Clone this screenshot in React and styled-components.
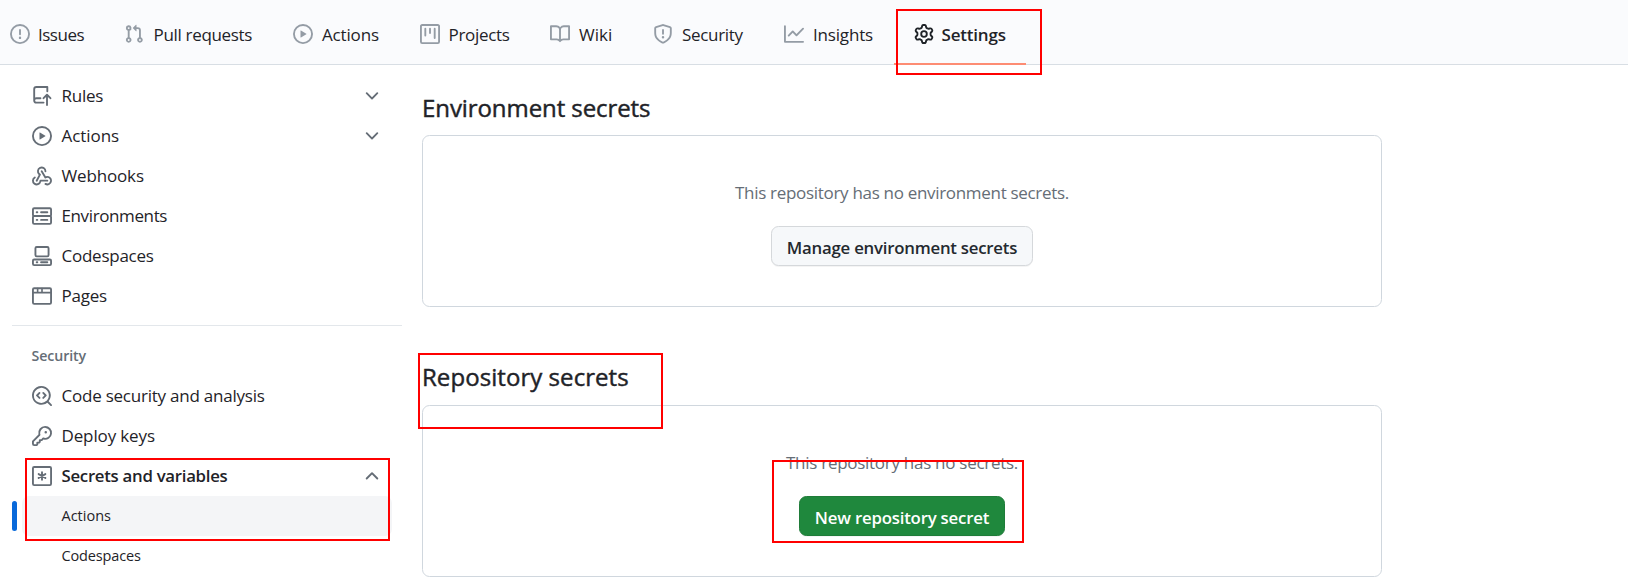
import React from "react";
import styled, { createGlobalStyle, css } from "styled-components";

const GlobalStyle = createGlobalStyle`
  *, *::before, *::after { box-sizing: border-box; }
  body {
    margin: 0;
    background: #fff;
    color: #1f2328;
    font-family: "Open Sans", "Noto Sans", sans-serif;
    overflow: hidden;
  }
  h2, p { margin: 0; }
`;

const Page = styled.div`
  position: relative;
  width: 1628px;
  height: 588px;
  overflow: hidden;
`;

const Nav = styled.nav`
  display: flex;
  height: 65px;
  background: #fafbfd;
  border-bottom: 1px solid #d8dee4;
`;

const Tab = styled.a`
  display: flex;
  flex: none;
  align-items: center;
  gap: ${(p) => p.$gap ?? 9}px;
  width: ${(p) => p.$width}px;
  height: 65px;
  padding: 4px 0 0 ${(p) => p.$pad ?? 20}px;
  border-bottom: 2px solid ${(p) => (p.$active ? "#fd8c73" : "transparent")};
  color: #1f2328;
  font-size: 17px;
  font-weight: ${(p) => (p.$active ? 600 : 400)};
  letter-spacing: ${(p) => p.$track ?? 0}px;
  white-space: nowrap;
  svg { color: ${(p) => (p.$active ? "#1f2328" : "#949ca5")}; }
`;

const TabLabel = styled.span`
  padding-top: 2px;
`;

const Glyph = styled.svg`
  flex: none;
  width: 20px;
  height: 20px;
  overflow: visible;
`;

const Body = styled.div`
  display: flex;
`;

const Sidebar = styled.aside`
  width: 390px;
  margin-left: 12px;
  padding-top: 11px;
`;

const NavRow = styled.a`
  display: flex;
  align-items: center;
  gap: 9.5px;
  height: 40px;
  padding: 0 20px;
  color: #1f2328;
  font-size: ${(p) => (p.$bold ? 16.8 : 17)}px;
  font-weight: ${(p) => (p.$bold ? 600 : 400)};
  letter-spacing: ${(p) => p.$track ?? 0}px;
  white-space: nowrap;
  svg { color: #656d76; }
`;

const RowLabel = styled.span`
  flex: 1;
  padding-bottom: 2px;
`;

const Divider = styled.hr`
  height: 1px;
  margin: 9px 0;
  border: 0;
  background: #e3e7eb;
`;

const GroupTitle = styled.div`
  height: 41px;
  padding: 0 19.5px;
  color: #656d76;
  font-size: 14.2px;
  font-weight: 600;
  line-height: 41px;
  letter-spacing: -0.1px;
`;

const SubRow = styled.a`
  position: relative;
  display: block;
  height: 40px;
  margin: 0 10px;
  padding-left: 39.5px;
  border-radius: 7px;
  color: #1f2328;
  font-size: 14.5px;
  line-height: 40px;
  letter-spacing: ${(p) => p.$track ?? 0}px;
  ${(p) =>
    p.$current &&
    css`
      background: #f4f5f7;
      &::before {
        content: "";
        position: absolute;
        left: -10px;
        top: 5px;
        width: 5px;
        height: 30px;
        border-radius: 4px;
        background: #0969da;
      }
    `}
`;

const Main = styled.main`
  width: 960px;
  margin-left: 20px;
  padding-top: 22px;
`;

const Section = styled.section`
  height: 270px;
`;

const Heading = styled.h2`
  height: 48px;
  font-size: 24px;
  font-weight: 400;
  -webkit-text-stroke: 0.45px currentColor;
  line-height: ${(p) => p.$leading}px;
  letter-spacing: ${(p) => p.$track ?? 0}px;
`;

const Blankslate = styled.div`
  display: flex;
  flex-direction: column;
  align-items: center;
  height: 172px;
  padding-top: 42px;
  border: 1px solid #d0d7de;
  border-radius: 7.5px;
`;

const Note = styled.p`
  height: 48px;
  color: #656d76;
  font-size: 17px;
  line-height: 30px;
  letter-spacing: ${(p) => p.$track ?? 0}px;
`;

const Button = styled.button`
  width: ${(p) => p.$width}px;
  height: 40px;
  padding: 3px 0 0;
  border: 1px solid ${(p) => (p.$primary ? "#1f7c39" : "#d5d8db")};
  border-radius: 7.5px;
  background: ${(p) => (p.$primary ? "#1f883d" : "#f6f8fa")};
  box-shadow: 0 1px 0 rgba(31, 35, 40, 0.05);
  color: ${(p) => (p.$primary ? "#fff" : "#24292f")};
  font-family: inherit;
  font-size: 16.8px;
  font-weight: 600;
  line-height: 35px;
  letter-spacing: ${(p) => p.$track ?? 0}px;
`;

const Marker = styled.div`
  position: absolute;
  left: ${(p) => p.$x}px;
  top: ${(p) => p.$y}px;
  width: ${(p) => p.$w}px;
  height: ${(p) => p.$h}px;
  border: 2px solid #ff0000;
  pointer-events: none;
`;

const paths = {
  pull: "M1.5 3.25a2.25 2.25 0 1 1 3 2.122v5.256a2.251 2.251 0 1 1-1.5 0V5.372A2.25 2.25 0 0 1 1.5 3.25Zm5.677-.177L9.573.677A.25.25 0 0 1 10 .854V2.5h1A2.5 2.5 0 0 1 13.5 5v5.628a2.251 2.251 0 1 1-1.5 0V5a1 1 0 0 0-1-1h-1v1.646a.25.25 0 0 1-.427.177L7.177 3.427a.25.25 0 0 1 0-.354ZM3.75 2.5a.75.75 0 1 0 0 1.5.75.75 0 0 0 0-1.5Zm0 9.5a.75.75 0 1 0 0 1.5.75.75 0 0 0 0-1.5Zm8.25.75a.75.75 0 1 0 1.5 0 .75.75 0 0 0-1.5 0Z",
  play: "M8 0a8 8 0 1 1 0 16A8 8 0 0 1 8 0ZM1.5 8a6.5 6.5 0 1 0 13 0 6.5 6.5 0 0 0-13 0Zm4.879-2.773 4.264 2.559a.25.25 0 0 1 0 .428l-4.264 2.559A.25.25 0 0 1 6 10.559V5.442a.25.25 0 0 1 .379-.215Z",
  project: "M1.75 0h12.5C15.216 0 16 .784 16 1.75v12.5A1.75 1.75 0 0 1 14.25 16H1.75A1.75 1.75 0 0 1 0 14.25V1.75C0 .784.784 0 1.75 0ZM1.5 1.75v12.5c0 .138.112.25.25.25h12.5a.25.25 0 0 0 .25-.25V1.75a.25.25 0 0 0-.25-.25H1.75a.25.25 0 0 0-.25.25ZM11.75 3a.75.75 0 0 1 .75.75v7.5a.75.75 0 0 1-1.5 0v-7.5a.75.75 0 0 1 .75-.75Zm-8.25.75a.75.75 0 0 1 1.5 0v5.5a.75.75 0 0 1-1.5 0ZM8 3a.75.75 0 0 1 .75.75v3.5a.75.75 0 0 1-1.5 0v-3.5A.75.75 0 0 1 8 3Z",
  book: "M0 1.75A.75.75 0 0 1 .75 1h4.253c1.227 0 2.317.59 3 1.501A3.743 3.743 0 0 1 11.006 1h4.245a.75.75 0 0 1 .75.75v10.5a.75.75 0 0 1-.75.75h-4.507a2.25 2.25 0 0 0-1.591.659l-.622.621a.75.75 0 0 1-1.06 0l-.622-.621A2.25 2.25 0 0 0 5.258 13H.75a.75.75 0 0 1-.75-.75Zm7.251 10.324.004-5.073-.002-2.253A2.25 2.25 0 0 0 5.003 2.5H1.5v9h3.757a3.75 3.75 0 0 1 1.994.574ZM8.755 4.75l-.004 7.322a3.752 3.752 0 0 1 1.992-.572H14.5v-9h-3.495a2.25 2.25 0 0 0-2.25 2.25Z",
  shield: "M7.467.133a1.748 1.748 0 0 1 1.066 0l5.25 1.68A1.75 1.75 0 0 1 15 3.48V7c0 1.566-.32 3.182-1.303 4.682-.983 1.498-2.585 2.813-5.032 3.855a1.697 1.697 0 0 1-1.33 0c-2.447-1.042-4.049-2.357-5.032-3.855C1.32 10.182 1 8.566 1 7V3.48a1.75 1.75 0 0 1 1.217-1.667Zm.61 1.429a.25.25 0 0 0-.153 0l-5.25 1.68a.25.25 0 0 0-.174.238V7c0 1.358.275 2.666 1.057 3.86.784 1.194 2.121 2.34 4.366 3.297a.196.196 0 0 0 .154 0c2.245-.956 3.582-2.104 4.366-3.298C13.225 9.666 13.5 8.36 13.5 7V3.48a.251.251 0 0 0-.174-.237l-5.25-1.68ZM8.75 4.75v3a.75.75 0 0 1-1.5 0v-3a.75.75 0 0 1 1.5 0ZM9 10.5a1 1 0 1 1-2 0 1 1 0 0 1 2 0Z",
  graph: "M1.5 1.75V13.5h13.75a.75.75 0 0 1 0 1.5H.75a.75.75 0 0 1-.75-.75V1.75a.75.75 0 0 1 1.5 0Zm14.28 2.53-5.25 5.25a.75.75 0 0 1-1.06 0L7 7.06 4.28 9.78a.751.751 0 0 1-1.042-.018.751.751 0 0 1-.018-1.042l3.25-3.25a.75.75 0 0 1 1.06 0L10 7.94l4.72-4.72a.751.751 0 0 1 1.042.018.751.751 0 0 1 .018 1.042Z",
  gear: "M8 0a8.2 8.2 0 0 1 .701.031C9.444.095 9.99.645 10.16 1.29l.288 1.107c.018.066.079.158.212.224.231.114.454.243.668.386.123.082.233.09.299.071l1.103-.303c.644-.176 1.392.021 1.82.63.27.385.506.792.704 1.218.315.675.111 1.422-.364 1.891l-.814.806c-.049.048-.098.147-.088.294.016.257.016.515 0 .772-.01.147.038.246.088.294l.814.806c.475.469.679 1.216.364 1.891a7.977 7.977 0 0 1-.704 1.217c-.428.61-1.176.807-1.82.63l-1.102-.302c-.067-.019-.177-.011-.3.071a5.909 5.909 0 0 1-.668.386c-.133.066-.194.158-.211.224l-.29 1.106c-.168.646-.715 1.196-1.458 1.26a8.006 8.006 0 0 1-1.402 0c-.743-.064-1.289-.614-1.458-1.26l-.289-1.106c-.018-.066-.079-.158-.212-.224a5.738 5.738 0 0 1-.668-.386c-.123-.082-.233-.09-.299-.071l-1.103.303c-.644.176-1.392-.021-1.82-.63a8.12 8.12 0 0 1-.704-1.218c-.315-.675-.111-1.422.363-1.891l.815-.806c.05-.048.098-.147.088-.294a6.214 6.214 0 0 1 0-.772c.01-.147-.038-.246-.088-.294l-.815-.806C.635 6.045.431 5.298.746 4.623a7.92 7.92 0 0 1 .704-1.217c.428-.61 1.176-.807 1.82-.63l1.102.302c.067.019.177.011.3-.071.214-.143.437-.272.668-.386.133-.066.194-.158.211-.224l.29-1.106C6.009.645 6.556.095 7.299.03 7.53.01 7.764 0 8 0Zm-.571 1.525c-.036.003-.108.036-.137.146l-.289 1.105c-.147.561-.549.967-.998 1.189-.173.086-.34.183-.5.29-.417.278-.97.423-1.529.27l-1.103-.303c-.109-.03-.175.016-.195.045-.22.312-.412.644-.573.99-.014.031-.021.11.059.19l.815.806c.411.406.562.957.53 1.456a4.709 4.709 0 0 0 0 .582c.032.499-.119 1.05-.53 1.456l-.815.806c-.081.08-.073.159-.059.19.162.346.353.677.573.989.02.03.085.076.195.046l1.102-.303c.56-.153 1.113-.008 1.53.27.161.107.328.204.501.29.447.222.85.629.997 1.189l.289 1.105c.029.109.101.143.137.146a6.6 6.6 0 0 0 1.142 0c.036-.003.108-.036.137-.146l.289-1.105c.147-.561.549-.967.998-1.189.173-.086.34-.183.5-.29.417-.278.97-.423 1.529-.27l1.103.303c.109.029.175-.016.195-.045.22-.313.411-.644.573-.99.014-.031.021-.11-.059-.19l-.815-.806c-.411-.406-.562-.957-.53-1.456a4.709 4.709 0 0 0 0-.582c-.032-.499.119-1.05.53-1.456l.815-.806c.081-.08.073-.159.059-.19a6.464 6.464 0 0 0-.573-.989c-.02-.03-.085-.076-.195-.046l-1.102.303c-.56.153-1.113.008-1.53-.27a4.44 4.44 0 0 0-.501-.29c-.447-.222-.85-.629-.997-1.189l-.289-1.105c-.029-.11-.101-.143-.137-.146a6.6 6.6 0 0 0-1.142 0ZM11 8a3 3 0 1 1-6 0 3 3 0 0 1 6 0ZM9.5 8a1.5 1.5 0 1 0-3.001.001A1.5 1.5 0 0 0 9.5 8Z",
  rules: "M1 2.5A2.5 2.5 0 0 1 3.5 0h8.75a.75.75 0 0 1 .75.75v3.5a.75.75 0 0 1-1.5 0V1.5h-8a1 1 0 0 0-1 1v6.708A2.493 2.493 0 0 1 3.5 9h3.25a.75.75 0 0 1 0 1.5H3.5a1 1 0 0 0 0 2h5.75a.75.75 0 0 1 0 1.5H3.5A2.5 2.5 0 0 1 1 11.5Zm13.23 7.79-1.48-1.48v6.44a.75.75 0 0 1-1.5 0V8.81L9.77 10.29a.75.75 0 1 1-1.06-1.06l2.75-2.75a.75.75 0 0 1 1.06 0l2.75 2.75a.75.75 0 1 1-1.06 1.06Z",
  webhook: "M5.5 4.25a2.25 2.25 0 0 1 4.5 0 .75.75 0 0 0 1.5 0 3.75 3.75 0 1 0-6.14 2.889l-2.272 4.258a.75.75 0 0 0 1.324.706L7 7.25a.75.75 0 0 0-.309-1.015A2.25 2.25 0 0 1 5.5 4.25ZM7.364 3.607a.75.75 0 0 1 1.03.257l2.608 4.349a3.75 3.75 0 1 1-.628 6.785.75.75 0 0 1 .752-1.299 2.25 2.25 0 1 0-.033-3.88.75.75 0 0 1-1.03-.256L7.107 4.636a.75.75 0 0 1 .257-1.03ZM2.9 8.776A.75.75 0 0 1 2.625 9.8 2.25 2.25 0 1 0 6 11.75a.75.75 0 0 1 .75-.751h5.5a.75.75 0 0 1 0 1.5H7.425a3.751 3.751 0 1 1-5.55-3.998.75.75 0 0 1 1.024.274Z",
  codescan: "M8.47 4.97a.75.75 0 0 0 0 1.06L9.94 7.5 8.47 8.97a.75.75 0 1 0 1.06 1.06l2-2a.75.75 0 0 0 0-1.06l-2-2a.75.75 0 0 0-1.06 0ZM6.53 6.03a.75.75 0 0 0-1.06-1.06l-2 2a.75.75 0 0 0 0 1.06l2 2a.75.75 0 1 0 1.06-1.06L5.06 7.5l1.47-1.47ZM12.246 13.307a7.501 7.501 0 1 1 1.06-1.06l2.474 2.473a.749.749 0 1 1-1.06 1.06l-2.474-2.473ZM1.5 7.5a6.002 6.002 0 0 0 3.608 5.504 6.002 6.002 0 0 0 6.486-1.117.748.748 0 0 1 .292-.293A6 6 0 1 0 1.5 7.5Z",
  key: "M10.5 0a5.499 5.499 0 1 1-1.288 10.848l-.932.932a.749.749 0 0 1-.53.22H7v.75a.749.749 0 0 1-.22.53l-.5.5a.749.749 0 0 1-.53.22H5v.75a.749.749 0 0 1-.22.53l-.5.5a.749.749 0 0 1-.53.22h-2A1.75 1.75 0 0 1 0 14.25v-2c0-.199.079-.389.22-.53l4.932-4.932A5.5 5.5 0 0 1 10.5 0Zm-4 5.5c-.001.431.069.86.205 1.269a.75.75 0 0 1-.181.768L1.5 12.56v1.69c0 .138.112.25.25.25h1.69l.06-.06v-1.19a.75.75 0 0 1 .75-.75h1.19l.06-.06v-1.19a.75.75 0 0 1 .75-.75h1.19l1.023-1.025a.75.75 0 0 1 .768-.18A4 4 0 1 0 6.5 5.5ZM11 6a1 1 0 1 1 0-2 1 1 0 0 1 0 2Z",
  down: "M12.78 5.22a.749.749 0 0 1 0 1.06l-4.25 4.25a.749.749 0 0 1-1.06 0L3.22 6.28a.749.749 0 1 1 1.06-1.06L8 8.939l3.72-3.719a.749.749 0 0 1 1.06 0Z",
  up: "M3.22 10.53a.749.749 0 0 1 0-1.06l4.25-4.25a.749.749 0 0 1 1.06 0l4.25 4.25a.749.749 0 1 1-1.06 1.06L8 6.811 4.28 10.53a.749.749 0 0 1-1.06 0Z",
};

const strokes = {
  issue: (
    <>
      <circle cx="8" cy="8" r="7.25" />
      <path d="M8 4.75v3.5" />
      <path d="M8 11v.1" strokeWidth="1.9" />
    </>
  ),
  server: (
    <>
      <rect x=".75" y="1.75" width="14.5" height="6.25" rx="1" />
      <rect x=".75" y="8" width="14.5" height="6.25" rx="1" />
      <path d="M3.75 5h.5M7.25 5h5M3.75 11.1h.5M7.25 11.1h5" />
    </>
  ),
  codespaces: (
    <>
      <rect x="2.75" y=".75" width="10.5" height="7.5" rx="1" />
      <rect x=".75" y="10.75" width="14.5" height="4.5" rx="1" />
      <path d="M3.75 13h.5M7.25 13h5" />
    </>
  ),
  browser: (
    <>
      <rect x=".75" y="1.75" width="14.5" height="12.5" rx="1" />
      <path d="M1 5.25h14M4.5 2v3M8 2v3" strokeWidth="1.3" />
    </>
  ),
  asterisk: (
    <>
      <rect x=".75" y=".75" width="14.5" height="14.5" rx="1" />
      <path d="M8 5v6M5.3 6.45l5.4 3.1M10.7 6.45l-5.4 3.1" />
    </>
  ),
};

function Icon({ name }) {
  if (strokes[name]) {
    return (
      <Glyph viewBox="0 0 16 16" fill="none" stroke="currentColor" strokeWidth="1.5" strokeLinecap="round">
        {strokes[name]}
      </Glyph>
    );
  }
  return (
    <Glyph viewBox="0 0 16 16" fill="currentColor">
      <path d={paths[name]} />
    </Glyph>
  );
}

const tabs = [
  { icon: "issue", label: "Issues", width: 104, pad: 10, gap: 8, track: -0.5 },
  { icon: "pull", label: "Pull requests", width: 169, gap: 9.5, track: -0.32 },
  { icon: "play", label: "Actions", width: 127, track: -0.16 },
  { icon: "project", label: "Projects", width: 130, gap: 8.5, track: -0.32 },
  { icon: "book", label: "Wiki", width: 103 },
  { icon: "shield", label: "Security", width: 131, track: -0.32 },
  { icon: "graph", label: "Insights", width: 130, track: -0.18 },
  { icon: "gear", label: "Settings", width: 132, gap: 7.5, track: -0.2, active: true },
];

const codeRows = [
  { icon: "rules", label: "Rules", chevron: "down", track: -0.25 },
  { icon: "play", label: "Actions", chevron: "down", track: -0.05 },
  { icon: "webhook", label: "Webhooks", track: -0.15 },
  { icon: "server", label: "Environments", track: -0.38 },
  { icon: "codespaces", label: "Codespaces", track: -0.25 },
  { icon: "browser", label: "Pages", track: -0.25 },
];

const securityRows = [
  { icon: "codescan", label: "Code security and analysis", track: -0.23 },
  { icon: "key", label: "Deploy keys", track: -0.13 },
  { icon: "asterisk", label: "Secrets and variables", chevron: "up", bold: true, track: -0.28 },
];

function Row({ icon, label, chevron, bold, track }) {
  return (
    <NavRow $bold={bold} $track={track}>
      <Icon name={icon} />
      <RowLabel>{label}</RowLabel>
      {chevron && <Icon name={chevron} />}
    </NavRow>
  );
}

export default function App() {
  return (
    <Page>
      <GlobalStyle />
      <Nav>
        {tabs.map((t) => (
          <Tab key={t.label} $width={t.width} $pad={t.pad} $gap={t.gap} $active={t.active} $track={t.track}>
            <Icon name={t.icon} />
            <TabLabel>{t.label}</TabLabel>
          </Tab>
        ))}
      </Nav>
      <Body>
        <Sidebar>
          {codeRows.map((r) => (
            <Row key={r.label} {...r} />
          ))}
          <Divider />
          <GroupTitle>Security</GroupTitle>
          {securityRows.map((r) => (
            <Row key={r.label} {...r} />
          ))}
          <SubRow $current>Actions</SubRow>
          <SubRow $track={-0.15}>Codespaces</SubRow>
        </Sidebar>
        <Main>
          <Section>
            <Heading $leading={42} $track={-0.08}>Environment secrets</Heading>
            <Blankslate>
              <Note $track={-0.31}>This repository has no environment secrets.</Note>
              <Button $width={262} $track={-0.23}>Manage environment secrets</Button>
            </Blankslate>
          </Section>
          <Section>
            <Heading $leading={40} $track={0.06}>Repository secrets</Heading>
            <Blankslate>
              <Note $track={-0.28}>This repository has no secrets.</Note>
              <Button $width={206} $track={-0.2} $primary>New repository secret</Button>
            </Blankslate>
          </Section>
        </Main>
      </Body>
      <Marker $x={896} $y={9} $w={146} $h={66} />
      <Marker $x={25} $y={458} $w={365} $h={83} />
      <Marker $x={418} $y={353} $w={245} $h={76} />
      <Marker $x={772} $y={460} $w={252} $h={83} />
    </Page>
  );
}
